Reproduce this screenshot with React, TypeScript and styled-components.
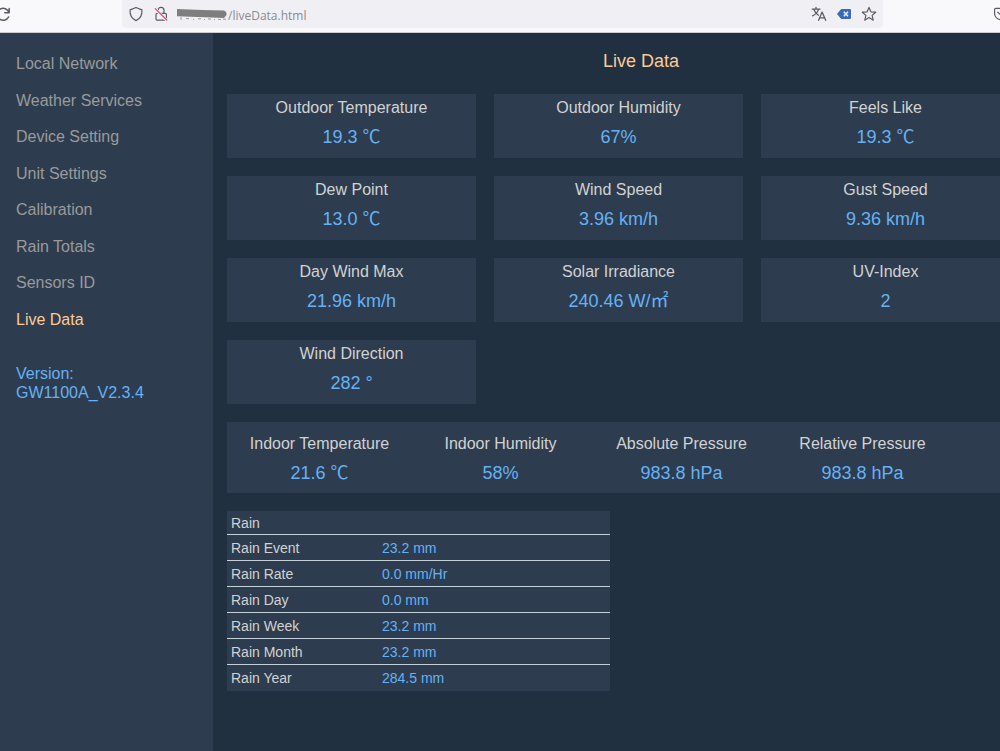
import React from "react";
import styled, { createGlobalStyle } from "styled-components";

const color = {
  page: "#213040",
  panel: "#2d3d4f",
  label: "#d2d2d2",
  muted: "#9a9a9a",
  value: "#66b1f5",
  accent: "#fccb94",
  rule: "#c4d0da",
  chrome: "#f9f9fb",
  field: "#f0f0f4",
  icon: "#5b5b66",
};

const GlobalStyle = createGlobalStyle`
  *, *::before, *::after { box-sizing: border-box; }
  html, body, #root { min-height: 100vh; }
  body {
    margin: 0;
    overflow-x: hidden;
    background: ${color.page};
    color: ${color.label};
    font-family: "Liberation Sans", Arial, "Noto Sans CJK SC", sans-serif;
    font-size: 16px;
  }
`;

const Window = styled.div`
  display: flex;
  flex-direction: column;
  min-width: 1069px;
  min-height: 100vh;
`;

const Toolbar = styled.header`
  display: flex;
  align-items: flex-start;
  height: 33px;
  padding-right: 56px;
  background: ${color.chrome};
  border-bottom: 1px solid #c9ccd3;
`;

const IconButton = styled.button`
  display: flex;
  align-items: center;
  justify-content: center;
  flex: none;
  width: 25px;
  height: 28px;
  padding: 0;
  border: 0;
  background: none;
  color: ${color.icon};

  svg {
    flex: none;
  }
`;

const ReloadButton = styled(IconButton)`
  width: 11px;
  justify-content: flex-end;
`;

const AddressBar = styled.div`
  display: flex;
  flex: 1;
  align-items: center;
  height: 28px;
  margin: 0 105px 0 111px;
  padding: 0 2px 0 1px;
  background: ${color.field};
  border-radius: 0 0 4px 4px;
`;

const HiddenHost = styled.svg`
  flex: none;
  margin-left: 4px;
`;

const AddressInput = styled.input`
  flex: 1;
  min-width: 0;
  height: 28px;
  padding: 3px 0 0;
  border: 0;
  outline: 0;
  background: none;
  color: #8b8b90;
  font-family: "Open Sans", "Noto Sans", sans-serif;
  font-size: 12px;
`;

const Body = styled.div`
  display: flex;
  flex: 1;
`;

const Sidebar = styled.aside`
  flex: none;
  width: 213px;
  padding: 13px 16px;
  background: ${color.panel};
`;

const Menu = styled.ul`
  display: grid;
  grid-auto-rows: 1fr;
  align-items: center;
  height: 292px;
  margin: 0;
  padding: 0;
  list-style: none;
`;

const MenuLink = styled.a<{ $active?: boolean }>`
  color: ${(p) => (p.$active ? color.accent : color.muted)};
  line-height: 20px;
  text-decoration: none;
`;

const Version = styled.p`
  margin: 26px 0 0;
  color: ${color.value};
  line-height: 19px;
`;

const Main = styled.main`
  display: flex;
  flex: 1;
  flex-direction: column;
  gap: 18px;
  padding: 16px 14px;
`;

const Title = styled.h1`
  margin: 0 0 3px;
  color: ${color.accent};
  font-size: 18px;
  font-weight: 400;
  line-height: 24px;
  text-align: center;
`;

const Cards = styled.dl`
  display: grid;
  grid-template-columns: repeat(auto-fill, 249px);
  gap: 18px;
  margin: 0;
`;

const Card = styled.div`
  padding: 4px 0 8px;
  background: ${color.panel};
  text-align: center;
`;

const Label = styled.dt`
  line-height: 20px;
`;

const Value = styled.dd`
  margin: 6px 0 0;
  color: ${color.value};
  font-size: 18px;
  line-height: 26px;
`;

const IndoorPanel = styled.dl`
  display: grid;
  grid-template-columns: repeat(4, 181px);
  margin: 0;
  padding: 12px 2px 7px;
  background: ${color.panel};
  text-align: center;
`;

const RainTable = styled.table`
  width: 383px;
  background: ${color.panel};
  border-collapse: collapse;
  font-size: 14px;
  line-height: 18px;

  caption {
    height: 23px;
    padding: 3px 4px 0;
    background: ${color.panel};
    text-align: left;
  }
`;

const RainRow = styled.tr`
  height: 26px;
  border-top: 1px solid ${color.rule};
`;

const RainName = styled.th`
  width: 155px;
  padding: 0 4px;
  font-weight: 400;
  text-align: left;
`;

const RainValue = styled.td`
  padding: 0;
  color: ${color.value};
`;

const menu = [
  "Local Network",
  "Weather Services",
  "Device Setting",
  "Unit Settings",
  "Calibration",
  "Rain Totals",
  "Sensors ID",
  "Live Data",
];

const outdoor = [
  ["Outdoor Temperature", "19.3 ℃"],
  ["Outdoor Humidity", "67%"],
  ["Feels Like", "19.3 ℃"],
  ["Dew Point", "13.0 ℃"],
  ["Wind Speed", "3.96 km/h"],
  ["Gust Speed", "9.36 km/h"],
  ["Day Wind Max", "21.96 km/h"],
  ["Solar Irradiance", "240.46 W/㎡"],
  ["UV-Index", "2"],
  ["Wind Direction", "282 °"],
];

const indoor = [
  ["Indoor Temperature", "21.6 ℃"],
  ["Indoor Humidity", "58%"],
  ["Absolute Pressure", "983.8 hPa"],
  ["Relative Pressure", "983.8 hPa"],
];

const rain = [
  ["Rain Event", "23.2 mm"],
  ["Rain Rate", "0.0 mm/Hr"],
  ["Rain Day", "0.0 mm"],
  ["Rain Week", "23.2 mm"],
  ["Rain Month", "23.2 mm"],
  ["Rain Year", "284.5 mm"],
];

const stroke = {
  fill: "none",
  stroke: "currentColor",
  strokeWidth: 1.2,
  strokeLinecap: "round" as const,
  strokeLinejoin: "round" as const,
};

const ReloadIcon = () => (
  <svg width="16" height="16" viewBox="0 0 16 16" {...stroke} strokeWidth="1.5">
    <path d="M14.2 2.4v4.4H9.8M14 6.6A6 6 0 1 0 13.6 11" />
  </svg>
);

const ShieldIcon = () => (
  <svg width="16" height="16" viewBox="0 0 16 16" {...stroke}>
    <path d="M8 1.5 13.9 3.9C14.3 8.6 12.6 12.6 8 14.6 3.4 12.6 1.7 8.6 2.1 3.9Z" />
  </svg>
);

const InsecureIcon = () => (
  <svg width="16" height="16" viewBox="0 0 16 16" {...stroke}>
    <path d="M5 7.2V4.4a3 3 0 0 1 6 0v2.8" />
    <rect x="3" y="7.4" width="10.4" height="6.8" rx="1.2" />
    <path d="M2.2 3 13.6 14.2" stroke={color.field} strokeWidth="3" />
    <path d="M2.2 2.6 13.8 14" stroke="#e2476c" />
  </svg>
);

const TranslateIcon = () => (
  <svg width="16" height="16" viewBox="0 0 16 16" {...stroke} strokeWidth="1.3">
    <path d="M1.2 3.2H9M5 1.3V3.2M7.5 3.4C6.6 6.2 4.6 8.4 1.6 9.8M2.8 3.6C3.8 6 5.4 8 7.4 9.2" />
    <path d="M7.6 14.3 11.1 6 14.7 14.3M8.8 11.8H13.5" />
  </svg>
);

const ClearIcon = () => (
  <svg width="16" height="16" viewBox="0 0 16 16">
    <path d="M1 8 5.2 3H14q1 0 1 1v8q0 1-1 1H5.2Z" fill="#3a6bb8" />
    <path d="M7.8 5.8 12 10.2M12 5.8 7.8 10.2" stroke="#e9effa" strokeWidth="1.5" />
  </svg>
);

const StarIcon = () => (
  <svg width="16" height="16" viewBox="0 0 16 16" {...stroke}>
    <path d="M8 1.4 9.9 5.8 14.7 6.2 11.1 9.4 12.2 14.2 8 11.6 3.8 14.2 4.9 9.4 1.3 6.2 6.1 5.8Z" />
  </svg>
);

const PocketIcon = () => (
  <svg width="16" height="16" viewBox="0 0 16 16" {...stroke}>
    <path d="M2.8 2.4H13.2q1.2 0 1.2 1.2V7.4a6.4 6.4 0 0 1-12.8 0V3.6q0-1.2 1.2-1.2Z" />
    <path d="M4.8 6.2 8 9.2 11.2 6.2" />
  </svg>
);

const Stat = ({ name, value }: { name: string; value: string }) => (
  <>
    <Label>{name}</Label>
    <Value>{value}</Value>
  </>
);

export default function App() {
  return (
    <Window>
      <GlobalStyle />
      <Toolbar>
        <ReloadButton aria-label="Reload">
          <ReloadIcon />
        </ReloadButton>
        <AddressBar>
          <IconButton aria-label="Tracking protection">
            <ShieldIcon />
          </IconButton>
          <IconButton aria-label="Connection not secure">
            <InsecureIcon />
          </IconButton>
          <HiddenHost width="51" height="16" viewBox="0 0 51 16" aria-hidden="true">
            <path d="M0 3 25 4 47 4.6Q50 6 49.5 9L47 12 35 11.6 0 10.2Z" fill="#7e7e7e" />
            <path d="M4 11v3M9 12.6h3M16 13.4h1M21 12.8h3M27 13.4h1M31 13h3M37 13.6h1M41 13.4h3M46 13.2h3" stroke="#9a9a9e" />
          </HiddenHost>
          <AddressInput aria-label="Address" defaultValue="/liveData.html" />
          <IconButton aria-label="Translate">
            <TranslateIcon />
          </IconButton>
          <IconButton aria-label="Clear">
            <ClearIcon />
          </IconButton>
          <IconButton aria-label="Bookmark">
            <StarIcon />
          </IconButton>
        </AddressBar>
        <IconButton aria-label="Save to Pocket">
          <PocketIcon />
        </IconButton>
      </Toolbar>
      <Body>
        <Sidebar>
          <nav>
            <Menu>
              {menu.map((item) => (
                <li key={item}>
                  <MenuLink href="#" $active={item === "Live Data"}>
                    {item}
                  </MenuLink>
                </li>
              ))}
            </Menu>
          </nav>
          <Version>
            Version:
            <br />
            GW1100A_V2.3.4
          </Version>
        </Sidebar>
        <Main>
          <Title>Live Data</Title>
          <Cards>
            {outdoor.map(([name, value]) => (
              <Card key={name}>
                <Stat name={name} value={value} />
              </Card>
            ))}
          </Cards>
          <IndoorPanel>
            {indoor.map(([name, value]) => (
              <div key={name}>
                <Stat name={name} value={value} />
              </div>
            ))}
          </IndoorPanel>
          <RainTable>
            <caption>Rain</caption>
            <tbody>
              {rain.map(([name, value]) => (
                <RainRow key={name}>
                  <RainName scope="row">{name}</RainName>
                  <RainValue>{value}</RainValue>
                </RainRow>
              ))}
            </tbody>
          </RainTable>
        </Main>
      </Body>
    </Window>
  );
}
